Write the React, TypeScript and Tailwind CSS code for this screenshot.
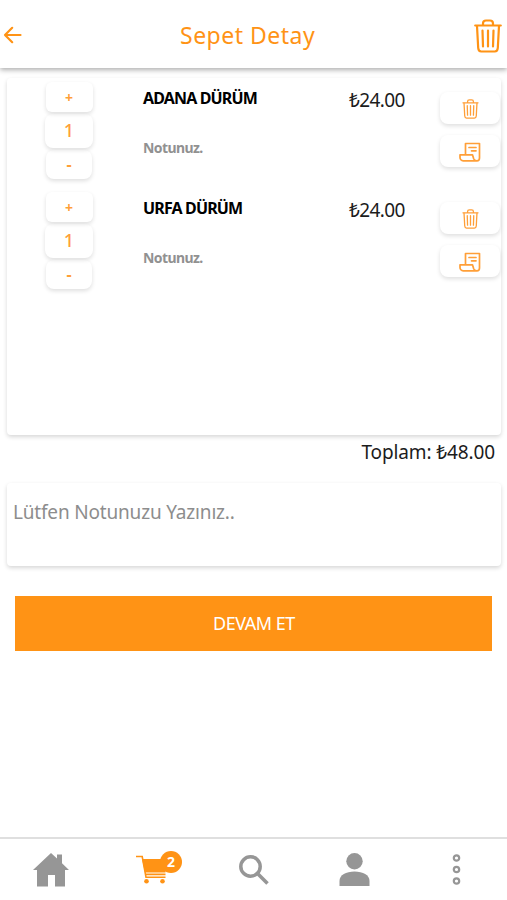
import type { ReactNode } from 'react';

const items = [
  { id: 1, name: 'ADANA DÜRÜM', price: '₺24.00', count: 1 },
  { id: 2, name: 'URFA DÜRÜM', price: '₺24.00', count: 1 },
];

function TrashIcon({ className }: { className: string }) {
  return (
    <svg className={className} viewBox="0 0 28 34" fill="none" stroke="currentColor" strokeWidth="2.200" strokeLinecap="round" strokeLinejoin="round">
      <path d="M1.200 6.500h25.600M9 6V4.500C9 2.500 10 1.500 12 1.500h4c2 0 3 1 3 3V6" />
      <path d="M3 7l1.200 22c.2 2.400 1 3.500 3 3.500h13.600c2 0 2.800-1.100 3-3.500L25 7" />
      <path d="M8.500 11.500l.5 16M14 11.500v16M19.500 11.500l-.5 16" />
    </svg>
  );
}

function NoteIcon() {
  return (
    <svg className="h-5 w-[22px]" viewBox="0 0 22 20" fill="none" stroke="currentColor" strokeWidth="1.700" strokeLinecap="round" strokeLinejoin="round">
      <path d="M6.500 12.500V1.500h14v14.500c0 1.800-1 2.800-2.500 2.800H4.200C2.200 18.800 1 17.200 1 15.500v-2.700h12.500l1.200 4c.4 1.200 1.500 2 3 2" />
      <path d="M10 5.500h7M12.500 8.800h4.500" />
    </svg>
  );
}

function BarButton({ children }: { children: ReactNode }) {
  return <button className="flex h-full flex-1 items-center justify-center text-[#969696]">{children}</button>;
}

function CartRow({ item }: { item: (typeof items)[number] }) {
  return (
    <li className="flex h-[110px]">
      {/* Quantity */}
      <div className="ml-[38px] flex w-12 shrink-0 flex-col items-center pt-1 font-medium text-[#ff9f38]">
        <button className="h-[30px] w-[47px] rounded-md text-[14px] font-bold leading-[31px] shadow-[0_2px_4px_rgba(0,0,0,0.13)]">+</button>
        <span className="mt-[2px] h-[34px] w-12 rounded-lg text-center text-[18px] leading-[33px] shadow-[0_2px_4px_rgba(0,0,0,0.13)]">{item.count}</span>
        <button className="mt-[2px] h-[29px] w-[46px] rounded-lg text-[16px] font-bold leading-[25px] shadow-[0_2px_4px_rgba(0,0,0,0.13)]">-</button>
      </div>

      <div className="ml-[50px] w-[206px] shrink-0 whitespace-nowrap pt-2 font-bold">
        <p className="text-[16px] leading-6 tracking-[-0.85px] text-black">{item.name}</p>
        <p className="mt-[26px] text-[14px] leading-6 tracking-[-0.6px] text-[#919191]">Notunuz.</p>
      </div>

      <p className="w-[91px] shrink-0 pt-2.5 text-[19px] leading-6 tracking-[-0.6px] text-[#1c1c1c]">{item.price}</p>

      <div className="flex w-[60px] flex-col pt-[14px] text-[#ff9f38]">
        <button className="flex h-8 items-center justify-center rounded-lg pt-[2px] shadow-[0_2px_4px_rgba(0,0,0,0.13)]">
          <TrashIcon className="h-5 w-[17px]" />
        </button>
        <button className="mt-[11px] flex h-8 items-center justify-center rounded-lg pt-px shadow-[0_2px_4px_rgba(0,0,0,0.13)]">
          <NoteIcon />
        </button>
      </div>
    </li>
  );
}

export default function App() {
  return (
    <div className="flex h-[900px] w-[507px] flex-col overflow-hidden bg-white font-['Noto_Sans','Open_Sans',sans-serif]">
      {/* Header */}
      <header className="z-10 flex h-[68px] shrink-0 items-center bg-white text-[#ff9315] shadow-[0_2px_5px_rgba(0,0,0,0.32)]">
        <button className="ml-[3px] w-[30px]">
          <svg className="mt-[2px] h-5 w-5" viewBox="0 0 20 20" fill="none" stroke="currentColor" strokeWidth="2.200" strokeLinecap="round" strokeLinejoin="round">
            <path d="M17.500 10H2M9.200 2.800L2 10l7.200 7.200" />
          </svg>
        </button>
        <h1 className="ml-[147px] w-[294px] whitespace-nowrap pt-[2px] text-[23px] leading-8 tracking-[0.5px]">Sepet Detay</h1>
        <button>
          <TrashIcon className="mt-[3px] h-[34px] w-7" />
        </button>
      </header>

      <main className="flex flex-1 flex-col">
        <ul className="ml-[7px] mt-2.5 h-[357px] w-[494px] rounded-sm shadow-[0_2px_4px_rgba(0,0,0,0.16)]">
          {items.map((item) => (
            <CartRow key={item.id} item={item} />
          ))}
        </ul>

        <p className="mr-[12px] mt-[5px] whitespace-nowrap text-right text-[19px] leading-6 tracking-[-0.12px] text-[#1c1c1c]">Toplam: ₺48.00</p>

        <div className="ml-[7px] mt-[19px] h-[83px] w-[494px] rounded-sm pl-1.5 pt-[17px] shadow-[0_2px_4px_rgba(0,0,0,0.16)]">
          <p className="whitespace-nowrap text-[19px] leading-6 tracking-[-0.18px] text-[#8d8d8d]">Lütfen Notunuzu Yazınız..</p>
        </div>

        <button className="ml-[15px] mt-[30px] h-[55px] w-[477px] bg-[#ff9315] pl-px text-[18px] tracking-[-0.5px] text-white">DEVAM ET</button>
      </main>

      {/* Tab bar */}
      <nav className="flex h-[63px] shrink-0 items-center border-t-2 border-[#dfdfdf]">
        <BarButton>
          <svg className="h-[34px] w-9" viewBox="0 0 36 34" fill="currentColor">
            <path d="M18 0l6 5.500V1.500h5v8.700L36 17h-4v16.500H22V22h-7v11.500H4V17H0z" />
          </svg>
        </BarButton>
        <BarButton>
          <span className="relative right-px text-[#ff9315]">
            <svg className="h-[29px] w-[30px]" viewBox="0 0 30 29" fill="none" stroke="currentColor" strokeWidth="1.600">
              <path d="M6 4h23.500v13.500H9z" fill="currentColor" stroke="none" />
              <path d="M0 1.500h6.200L10 22.300h19.500M9 19.400h20.500" />
              <circle cx="10.500" cy="26.200" r="2.300" fill="currentColor" stroke="none" />
              <circle cx="26.500" cy="26.200" r="2.300" fill="currentColor" stroke="none" />
            </svg>
            <span className="absolute -top-[4px] left-6 h-[22px] w-[22px] rounded-full bg-[#ff9315] text-center text-[14px] font-bold leading-[22px] text-white">2</span>
          </span>
        </BarButton>
        <BarButton>
          <svg className="h-[30px] w-[30px]" viewBox="0 0 30 30" fill="none" stroke="currentColor" strokeWidth="3.500">
            <circle cx="11.500" cy="11.500" r="9.700" />
            <path d="M18 18l10.500 10.500" />
          </svg>
        </BarButton>
        <BarButton>
          <svg className="h-[33px] w-[31px]" viewBox="0 0 31 33" fill="currentColor">
            <circle cx="15.500" cy="8.200" r="8.200" />
            <path d="M0.500 33v-5C0.500 22 7 18.500 15.500 18.500S30.500 22 30.500 28V33z" />
          </svg>
        </BarButton>
        <BarButton>
          <svg className="h-8 w-2.5" viewBox="0 0 10 32" fill="none" stroke="currentColor" strokeWidth="2.200">
            <circle cx="5.500" cy="4" r="2.700" />
            <circle cx="5.500" cy="15.500" r="2.700" />
            <circle cx="5.500" cy="27" r="2.700" />
          </svg>
        </BarButton>
      </nav>
    </div>
  );
}
